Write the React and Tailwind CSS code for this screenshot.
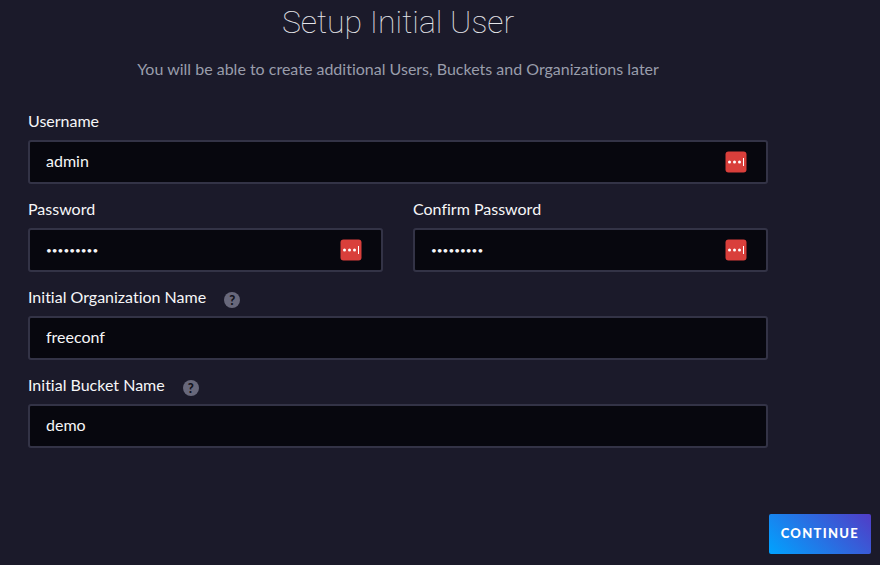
import React from "react";

const fieldClass =
  "block h-11 w-full rounded-[3px] border-2 border-[#333346] bg-[#07070e] px-4 text-[#f6f6f8] outline-none focus:border-[#00a3ff]";

function FillIcon() {
  return (
    <svg
      aria-hidden="true"
      viewBox="0 0 22 22"
      className="absolute top-[11px] right-[21px] h-[22px] w-[22px]"
    >
      <rect x="0.5" y="0.5" width="21" height="21" rx="3" fill="#d93f3b" />
      <circle cx="4.5" cy="11" r="1.5" fill="#fff" />
      <circle cx="9.5" cy="11" r="1.5" fill="#fff" />
      <circle cx="14.5" cy="11" r="1.5" fill="#fff" />
      <rect x="18" y="7" width="1" height="8" fill="#fff" />
    </svg>
  );
}

function Field({ id, label, value, type = "text", fill = false, help }) {
  return (
    <div className="min-w-0 flex-1">
      <div className="flex h-7 items-start gap-[18px]">
        <label htmlFor={id} className="text-base leading-[18px] text-[#f6f6f8]">
          {label}
        </label>
        {help && (
          <button
            type="button"
            aria-label={help}
            className="mt-1 flex h-4 w-4 items-center justify-center rounded-full bg-[#68687b] text-[13px] leading-4 font-black text-[#13131c]"
          >
            ?
          </button>
        )}
      </div>
      <div className="relative">
        <input
          id={id}
          type={type}
          defaultValue={value}
          className={`${fieldClass} ${type === "password" ? "text-[10px]" : "pb-[3px] text-base"}`}
        />
        {fill && <FillIcon />}
      </div>
    </div>
  );
}

export default function App() {
  return (
    <main className="min-h-screen bg-[#1b1a2a] font-['Lato','Open_Sans',sans-serif] [font-variant-ligatures:no-common-ligatures]">
      <form onSubmit={(e) => e.preventDefault()}>
        <div className="pt-1 pr-28 pl-7">
          <h1 className="text-center font-['Roboto','Lato',sans-serif] text-[32px] leading-9 font-thin text-[#e6e6ea]">
            Setup Initial User
          </h1>
          <p className="mt-5 text-center text-base leading-[18px] text-[#999dab]">
            You will be able to create additional Users, Buckets and Organizations later
          </p>
          <div className="mt-[34px] flex flex-col gap-4">
            <Field id="username" label="Username" value="admin" fill />
            <div className="flex gap-[30px]">
              <Field id="password" label="Password" value="adminpass" type="password" fill />
              <Field id="confirm" label="Confirm Password" value="adminpass" type="password" fill />
            </div>
            <Field id="org" label="Initial Organization Name" value="freeconf" help="About organizations" />
            <Field id="bucket" label="Initial Bucket Name" value="demo" help="About buckets" />
          </div>
        </div>
        <div className="mt-[66px] flex justify-end pr-[9px]">
          <button
            type="submit"
            className="h-10 rounded-xs bg-linear-45/srgb from-[#00a3ff] to-[#513cc6] px-3 text-[13px] font-black tracking-widest text-white"
          >
            CONTINUE
          </button>
        </div>
      </form>
    </main>
  );
}
